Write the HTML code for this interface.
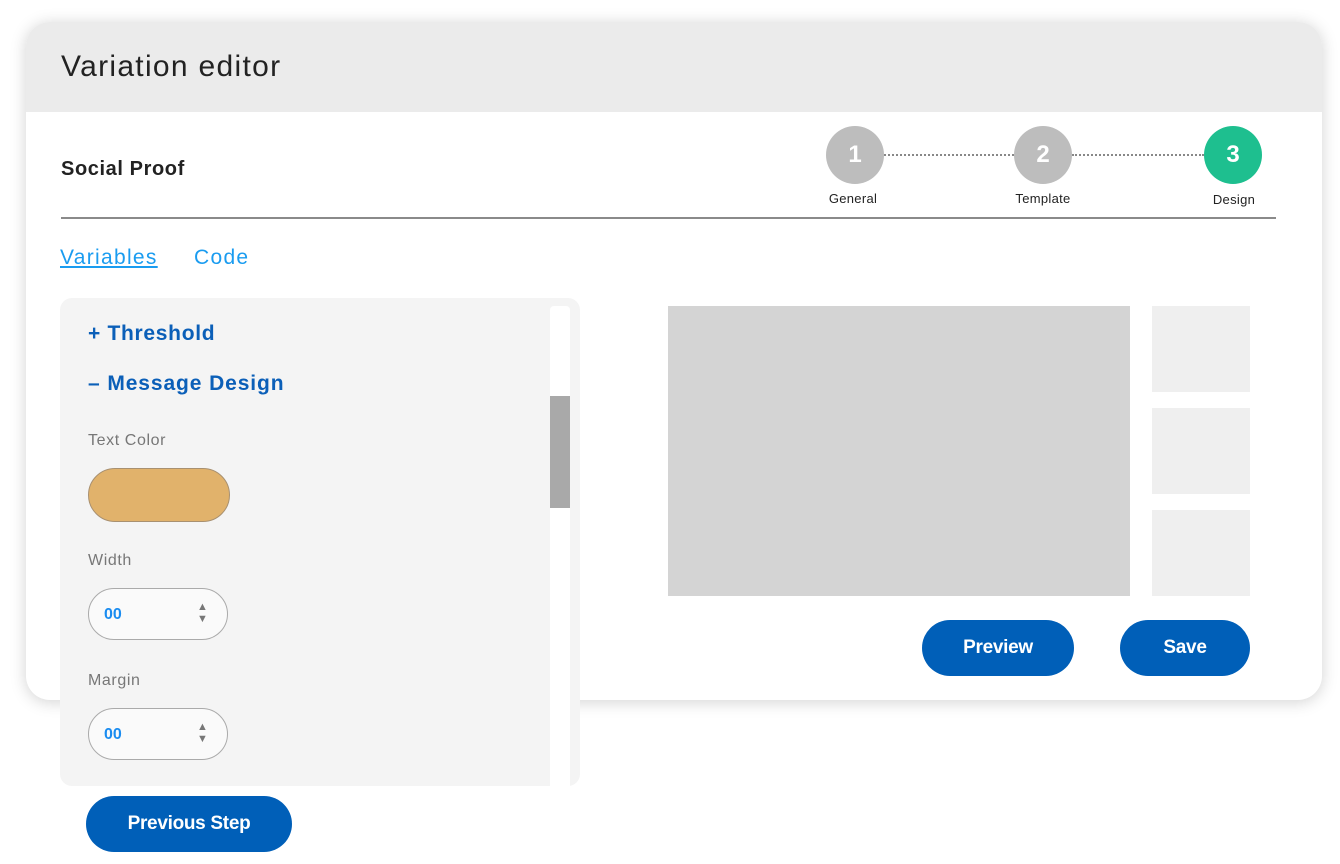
<!DOCTYPE html>
<html><head><style>
*{box-sizing:border-box;margin:0;padding:0}
body{width:1340px;height:864px;background:#fff;font-family:"Liberation Sans",sans-serif;position:relative;overflow:hidden}
.a{position:absolute}
.card{left:26px;top:22px;width:1296px;height:678px;border-radius:24px;background:#fff;box-shadow:0 2px 16px rgba(0,0,0,.18);overflow:hidden}
.hdr{left:0;top:0;width:1296px;height:90px;background:#ebebeb}
.circ{width:58px;height:58px;border-radius:50%;background:#bdbdbd;color:#fff;font-weight:bold;font-size:24px;text-align:center;line-height:58px}
.lbl{font-size:13px;color:#222;width:100px;text-align:center;letter-spacing:0.3px}
.btn{background:#005fb8;color:#fff;font-weight:bold;font-size:19px;border-radius:28px;text-align:center;line-height:56px;letter-spacing:-0.3px}
.gl{font-size:16px;color:#777;letter-spacing:0.6px}
.inp{width:140px;height:52px;border:1.5px solid #aaa;border-radius:26px;background:#fafafa}
</style></head><body>
<div class="a card">
 <div class="a hdr"></div>
 <div class="a" style="left:35px;top:28px;font-size:30px;color:#222;letter-spacing:1.3px">Variation editor</div>
</div>
<div class="a" style="left:61px;top:158px;font-size:20px;font-weight:bold;color:#222;letter-spacing:0.6px">Social Proof</div>
<div class="a" style="left:61px;top:217px;width:1215px;height:2px;background:#8a8a8a"></div>
<div class="a" style="left:884px;top:154px;width:130px;border-top:2px dotted #888"></div>
<div class="a" style="left:1072px;top:154px;width:132px;border-top:2px dotted #888"></div>
<div class="a circ" style="left:826px;top:126px">1</div>
<div class="a circ" style="left:1014px;top:126px">2</div>
<div class="a circ" style="left:1204px;top:126px;background:#1ebf8f">3</div>
<div class="a lbl" style="left:803px;top:191px">General</div>
<div class="a lbl" style="left:993px;top:191px">Template</div>
<div class="a lbl" style="left:1184px;top:192px">Design</div>
<div class="a" style="left:60px;top:246px;font-size:21px;color:#1a9cf0;text-decoration:underline;letter-spacing:1.3px">Variables</div>
<div class="a" style="left:194px;top:246px;font-size:21px;color:#1a9cf0;letter-spacing:1.3px">Code</div>
<div class="a" style="left:60px;top:298px;width:520px;height:488px;background:#f4f4f4;border-radius:12px"></div>
<div class="a" style="left:550px;top:306px;width:20px;height:480px;background:#fff;border-radius:4px 4px 0 0"></div>
<div class="a" style="left:550px;top:396px;width:20px;height:112px;background:#a9a9a9"></div>
<div class="a" style="left:88px;top:322px;font-size:21px;font-weight:bold;color:#0b5fb8;letter-spacing:0.7px">+ Threshold</div>
<div class="a" style="left:88px;top:372px;font-size:21px;font-weight:bold;color:#0b5fb8;letter-spacing:0.9px">– Message Design</div>
<div class="a gl" style="left:88px;top:432px">Text Color</div>
<div class="a" style="left:88px;top:468px;width:142px;height:54px;border-radius:27px;background:#e1b26b;border:1.5px solid #a89070"></div>
<div class="a gl" style="left:88px;top:552px">Width</div>
<div class="a inp" style="left:88px;top:588px"></div>
<div class="a" style="left:104px;top:606px;font-size:16px;font-weight:bold;color:#1a8cf0">00</div>
<div class="a" style="left:197px;top:601px;font-size:11px;line-height:12px;color:#777">▲<br>▼</div>
<div class="a gl" style="left:88px;top:672px">Margin</div>
<div class="a inp" style="left:88px;top:708px"></div>
<div class="a" style="left:104px;top:726px;font-size:16px;font-weight:bold;color:#1a8cf0">00</div>
<div class="a" style="left:197px;top:721px;font-size:11px;line-height:12px;color:#777">▲<br>▼</div>
<div class="a" style="left:668px;top:306px;width:462px;height:290px;background:#d4d4d4"></div>
<div class="a" style="left:1152px;top:306px;width:98px;height:86px;background:#efefef"></div>
<div class="a" style="left:1152px;top:408px;width:98px;height:86px;background:#efefef"></div>
<div class="a" style="left:1152px;top:510px;width:98px;height:86px;background:#efefef"></div>
<div class="a btn" style="left:922px;top:620px;width:152px;height:56px">Preview</div>
<div class="a btn" style="left:1120px;top:620px;width:130px;height:56px">Save</div>
<div class="a btn" style="left:86px;top:796px;width:206px;height:56px">Previous Step</div>
</body></html>
